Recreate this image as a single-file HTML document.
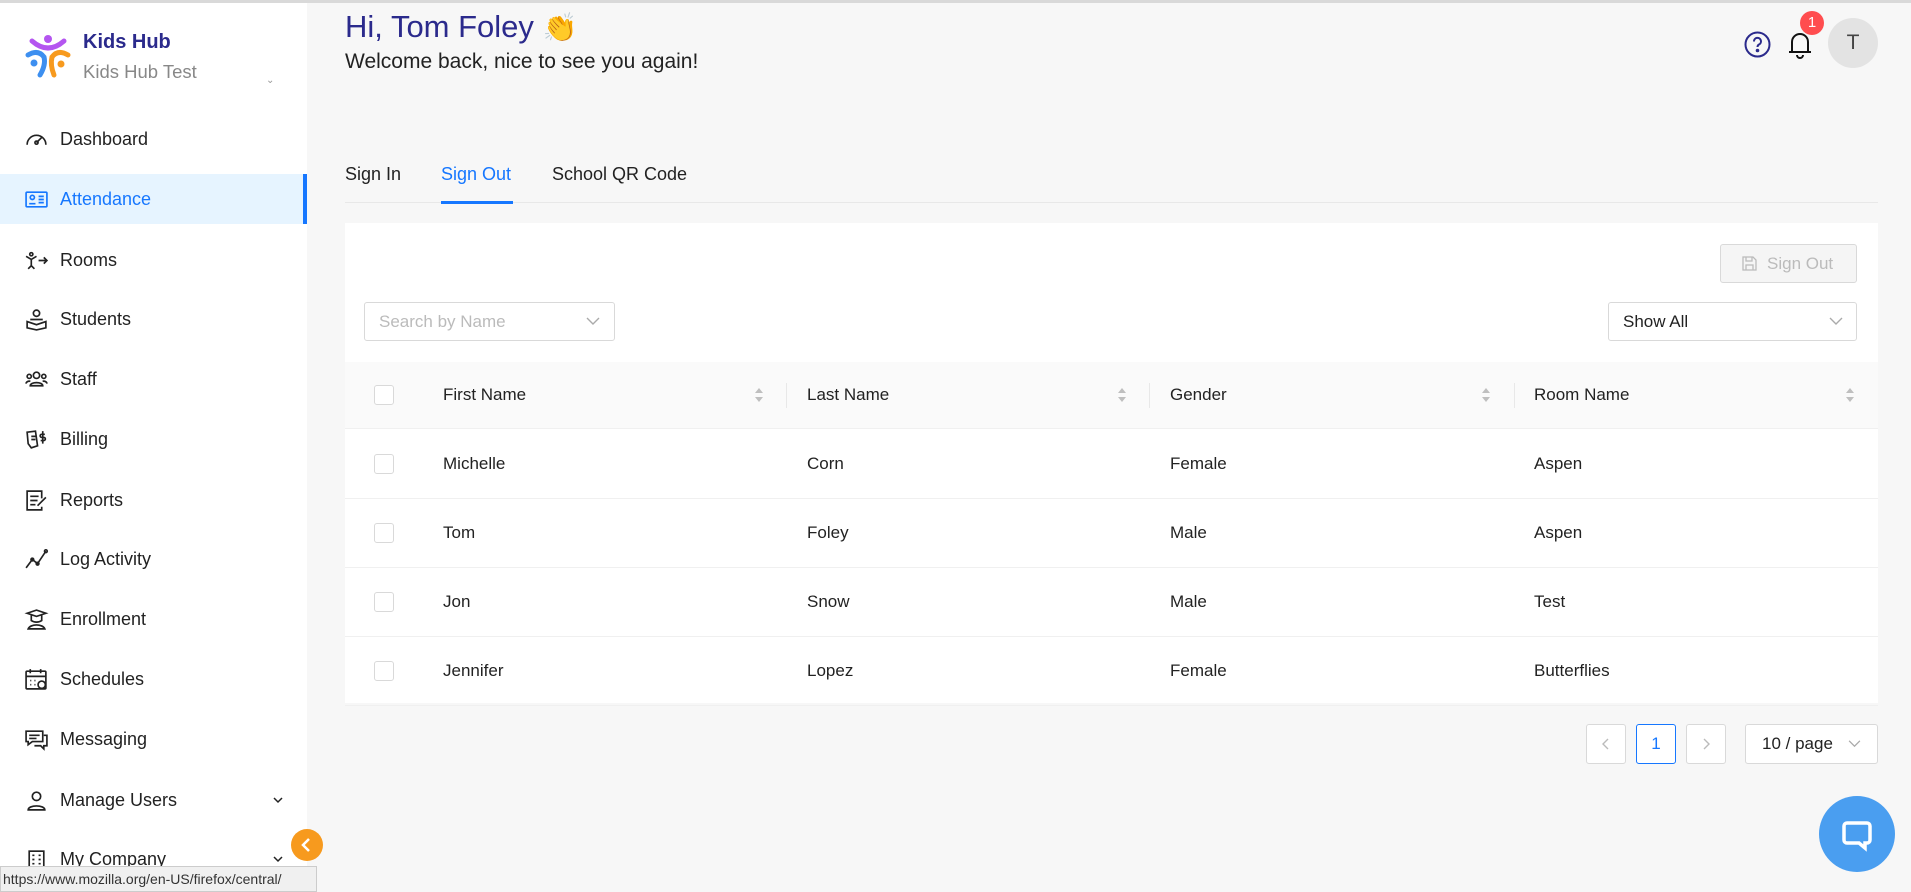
<!DOCTYPE html>
<html><head><meta charset="utf-8"><style>
*{box-sizing:border-box;margin:0;padding:0}
body{width:1911px;height:892px;overflow:hidden;background:#f7f7f7;font-family:"Liberation Sans",sans-serif;position:relative;color:#222}
.a{position:absolute}
.topline{left:0;top:0;width:1911px;height:3px;background:#d9d9d9}
.side{left:0;top:3px;width:307px;height:889px;background:#fff}
.mi{position:absolute;left:0;width:307px;height:50px;display:flex;align-items:center;font-size:18px;color:#222}
.mi svg{position:absolute;left:24px;width:25px;height:25px}
.mi span{position:absolute;left:60px}
.mi.act{background:#e6f4ff;color:#1677ff;border-right:4px solid #1677ff}
.chev{position:absolute;left:272px;width:12px;height:12px}
.card{left:345px;top:223px;width:1533px;height:480px;background:#fff}
.th{position:absolute;left:0;top:139px;width:1533px;height:67px;background:#fafafa;border-bottom:1px solid #f0f0f0}
.row{position:absolute;left:0;width:1533px;height:69px;border-bottom:1px solid #f0f0f0}
.cell{position:absolute;top:50%;transform:translateY(-50%);font-size:17px;color:#222}
.cb{position:absolute;left:29px;top:50%;margin-top:-10px;width:20px;height:20px;border:1px solid #d9d9d9;border-radius:3px;background:#fff}
.sort{position:absolute;top:50%;margin-top:-8px;width:10px;height:16px}
.div{position:absolute;top:21px;width:1px;height:25px;background:#e8e8e8}
.box{position:absolute;border:1px solid #d9d9d9;border-radius:3px;background:#fff}
</style></head><body>
<div class="a topline"></div>
<div class="a side">
 <svg class="a" style="left:24px;top:30px" width="48" height="48" viewBox="0 0 48 48">
  <path d="M8 8 Q24 22 40 8" stroke="#b455f0" stroke-width="5" fill="none" stroke-linecap="round"/>
  <circle cx="24" cy="6" r="4" fill="#b455f0"/>
  <path d="M4 22 Q14 16 20 24 Q22 32 16 42" stroke="#3d8ff0" stroke-width="5" fill="none" stroke-linecap="round"/>
  <circle cx="10" cy="30" r="3.5" fill="#3d8ff0"/>
  <path d="M44 22 Q34 16 28 24 Q26 32 30 42" stroke="#f79a1e" stroke-width="5" fill="none" stroke-linecap="round"/>
  <circle cx="37" cy="31" r="3.5" fill="#f79a1e"/>
 </svg>
 <div class="a" style="left:83px;top:28px;font-size:20px;font-weight:bold;color:#2B2A8C">Kids Hub</div>
 <div class="a" style="left:83px;top:58px;font-size:18.5px;color:#888">Kids Hub Test</div>
 <div class="a" style="left:266px;top:72px;font-size:10px;color:#999">⌄</div>
</div>
<div class="mi" style="top:114px"><svg viewBox="0 0 24 24" fill="none" stroke="#222" stroke-width="1.6"><path d="M3 17a9 9 0 1 1 18 0"/><path d="M12 15l5-5"/><circle cx="12" cy="15" r="1.5"/></svg><span>Dashboard</span></div>
<div class="mi act" style="top:174px"><svg viewBox="0 0 24 24" fill="none" stroke="#1677ff" stroke-width="1.6"><rect x="2" y="5" width="20" height="14" rx="1"/><circle cx="8" cy="10" r="2"/><path d="M5 16h6M14 9h5M14 12h5M14 15h5"/></svg><span>Attendance</span></div>
<div class="mi" style="top:235px"><svg viewBox="0 0 24 24" fill="none" stroke="#222" stroke-width="1.6"><circle cx="7" cy="6" r="1.5"/><path d="M2 8l5 3 5-3M7 11v6M4 20l3-3 3 3M14 12h8M19 9l3 3-3 3"/></svg><span>Rooms</span></div>
<div class="mi" style="top:294px"><svg viewBox="0 0 24 24" fill="none" stroke="#222" stroke-width="1.6"><circle cx="12" cy="6" r="3"/><path d="M6 12h12M3 14l9 3 9-3v6l-9 2-9-2z"/></svg><span>Students</span></div>
<div class="mi" style="top:354px"><svg viewBox="0 0 24 24" fill="none" stroke="#222" stroke-width="1.6"><circle cx="12" cy="8" r="3"/><circle cx="5" cy="9" r="2"/><circle cx="19" cy="9" r="2"/><path d="M6 18c0-4 12-4 12 0zM2 16c0-2 3-3 4-2M22 16c0-2-3-3-4-2"/></svg><span>Staff</span></div>
<div class="mi" style="top:414px"><svg viewBox="0 0 24 24" fill="none" stroke="#222" stroke-width="1.6"><path d="M3 5l8-1 2 14-6 2-3-4zM7 9h4M7 12h4M18 4v12M20 7h-3a1.5 1.5 0 0 0 0 3h2a1.5 1.5 0 0 1 0 3h-3"/></svg><span>Billing</span></div>
<div class="mi" style="top:475px"><svg viewBox="0 0 24 24" fill="none" stroke="#222" stroke-width="1.6"><path d="M17 10V3H3v18h14v-3M6 8h8M6 12h7M6 16h5M13 17l8-8"/></svg><span>Reports</span></div>
<div class="mi" style="top:534px"><svg viewBox="0 0 24 24" fill="none" stroke="#222" stroke-width="1.6"><path d="M2 20l6-8 5 4 8-12"/><circle cx="8" cy="12" r="1.3"/><circle cx="13" cy="16" r="1.3"/><circle cx="21" cy="4" r="1.3"/></svg><span>Log Activity</span></div>
<div class="mi" style="top:594px"><svg viewBox="0 0 24 24" fill="none" stroke="#222" stroke-width="1.6"><path d="M3 6l9-3 9 3-9 3zM7 8v5c3 2 7 2 10 0V8M4 21c2-5 14-5 16 0z"/></svg><span>Enrollment</span></div>
<div class="mi" style="top:654px"><svg viewBox="0 0 24 24" fill="none" stroke="#222" stroke-width="1.6"><rect x="2" y="4" width="19" height="17" rx="1"/><path d="M6 2v4M16 2v4M2 9h19"/><circle cx="17" cy="17" r="3.5" fill="#fff"/><path d="M6 13h1M10 13h1M6 17h1M10 17h1"/></svg><span>Schedules</span></div>
<div class="mi" style="top:714px"><svg viewBox="0 0 24 24" fill="none" stroke="#222" stroke-width="1.6"><path d="M2 4h16v10H8l-4 3v-3H2zM5 8h10M5 11h7M19 8h3v10h-3v3l-3-3h-6"/></svg><span>Messaging</span></div>
<div class="mi" style="top:775px"><svg viewBox="0 0 24 24" fill="none" stroke="#222" stroke-width="1.6"><circle cx="12" cy="8" r="4"/><path d="M4 21c0-5 16-5 16 0z"/></svg><span>Manage Users</span><svg class="chev" style="left:272px;width:12px;height:12px" viewBox="0 0 12 12" fill="none" stroke="#222" stroke-width="1.5"><path d="M2 4l4 4 4-4"/></svg></div>
<div class="mi" style="top:834px"><svg viewBox="0 0 24 24" fill="none" stroke="#222" stroke-width="1.6"><rect x="5" y="4" width="14" height="18"/><path d="M8 8h2M14 8h2M8 12h2M14 12h2M8 16h2M14 16h2"/></svg><span>My Company</span><svg class="chev" style="left:272px;width:12px;height:12px" viewBox="0 0 12 12" fill="none" stroke="#222" stroke-width="1.5"><path d="M2 4l4 4 4-4"/></svg></div>
<div class="a" style="left:0;top:866px;width:317px;height:26px;background:#f0f0f0;border:1px solid #ccc;font-size:14px;color:#333;padding:4px 2px;white-space:nowrap">https://www.mozilla.org/en-US/firefox/central/</div>
<div class="a" style="left:291px;top:829px;width:32px;height:32px;border-radius:50%;background:#f79a1e"><svg width="32" height="32" viewBox="0 0 32 32" fill="none" stroke="#fff" stroke-width="2.5"><path d="M18 10l-6 6 6 6"/></svg></div>
<div class="a" style="left:345px;top:9px;font-size:31px;color:#2B2A8C">Hi, Tom Foley <span style="font-size:28px">👏</span></div>
<div class="a" style="left:345px;top:50px;font-size:21px;color:#222">Welcome back, nice to see you again!</div>
<svg class="a" style="left:1744px;top:31px" width="27" height="27" viewBox="0 0 27 27" fill="none" stroke="#2B2A8C" stroke-width="2"><circle cx="13.5" cy="13.5" r="12"/><path d="M10 10.5a3.5 3.5 0 1 1 5 3c-1 .6-1.5 1.3-1.5 2.5"/><circle cx="13.5" cy="19.5" r=".8" fill="#2B2A8C"/></svg>
<svg class="a" style="left:1786px;top:28px" width="28" height="32" viewBox="0 0 28 32" fill="none" stroke="#111" stroke-width="2"><path d="M6 24V14a8 8 0 0 1 16 0v10zM3 24h22M11 27a3 3 0 0 0 6 0"/></svg>
<div class="a" style="left:1800px;top:11px;width:24px;height:24px;border-radius:50%;background:#ff4d4f;color:#fff;font-size:15px;text-align:center;line-height:24px">1</div>
<div class="a" style="left:1828px;top:18px;width:50px;height:50px;border-radius:50%;background:#e3e3e3;color:#444;font-size:21px;text-align:center;line-height:50px">T</div>
<div class="a" style="left:345px;top:202px;width:1533px;height:1px;background:#e8e8e8"></div>
<div class="a" style="left:345px;top:164px;font-size:18px;color:#222">Sign In</div>
<div class="a" style="left:441px;top:164px;font-size:18px;color:#1677ff">Sign Out</div>
<div class="a" style="left:441px;top:201px;width:72px;height:3px;background:#1677ff"></div>
<div class="a" style="left:552px;top:164px;font-size:18px;color:#222">School QR Code</div>
<div class="a card">
 <div class="box" style="left:1375px;top:21px;width:137px;height:39px;background:#f5f5f5;color:#bbb;font-size:17px;line-height:37px;padding-left:46px">Sign Out</div>
 <svg class="a" style="left:1397px;top:33px" width="15" height="15" viewBox="0 0 15 15" fill="none" stroke="#bbb" stroke-width="1.3"><path d="M1 1h10l3 3v10H1z M4 1v4h6V1 M4 14V9h7v5"/></svg>
 <div class="box" style="left:19px;top:79px;width:251px;height:39px;color:#bbb;font-size:17px;line-height:37px;padding-left:14px">Search by Name</div>
 <svg class="a" style="left:241px;top:93px" width="14" height="10" viewBox="0 0 14 10" fill="none" stroke="#aaa" stroke-width="1.4"><path d="M1 2l6 6 6-6"/></svg>
 <div class="box" style="left:1263px;top:79px;width:249px;height:39px;color:#222;font-size:17px;line-height:37px;padding-left:14px">Show All</div>
 <svg class="a" style="left:1484px;top:93px" width="14" height="10" viewBox="0 0 14 10" fill="none" stroke="#aaa" stroke-width="1.4"><path d="M1 2l6 6 6-6"/></svg>
 <div class="th">
  <div class="cb"></div>
  <div class="cell" style="left:98px">First Name</div>
  <div class="cell" style="left:462px">Last Name</div>
  <div class="cell" style="left:825px">Gender</div>
  <div class="cell" style="left:1189px">Room Name</div>
  <svg class="sort" style="left:409px" viewBox="0 0 10 16" fill="#bfbfbf"><path d="M5 1l4 5H1zM5 15l4-5H1z"/></svg>
  <svg class="sort" style="left:772px" viewBox="0 0 10 16" fill="#bfbfbf"><path d="M5 1l4 5H1zM5 15l4-5H1z"/></svg>
  <svg class="sort" style="left:1136px" viewBox="0 0 10 16" fill="#bfbfbf"><path d="M5 1l4 5H1zM5 15l4-5H1z"/></svg>
  <svg class="sort" style="left:1500px" viewBox="0 0 10 16" fill="#bfbfbf"><path d="M5 1l4 5H1zM5 15l4-5H1z"/></svg>
  <div class="div" style="left:441px"></div><div class="div" style="left:804px"></div><div class="div" style="left:1169px"></div>
 </div>
 <div class="row" style="top:207px"><div class="cb"></div><div class="cell" style="left:98px">Michelle</div><div class="cell" style="left:462px">Corn</div><div class="cell" style="left:825px">Female</div><div class="cell" style="left:1189px">Aspen</div></div>
 <div class="row" style="top:276px"><div class="cb"></div><div class="cell" style="left:98px">Tom</div><div class="cell" style="left:462px">Foley</div><div class="cell" style="left:825px">Male</div><div class="cell" style="left:1189px">Aspen</div></div>
 <div class="row" style="top:345px"><div class="cb"></div><div class="cell" style="left:98px">Jon</div><div class="cell" style="left:462px">Snow</div><div class="cell" style="left:825px">Male</div><div class="cell" style="left:1189px">Test</div></div>
 <div class="row" style="top:414px"><div class="cb"></div><div class="cell" style="left:98px">Jennifer</div><div class="cell" style="left:462px">Lopez</div><div class="cell" style="left:825px">Female</div><div class="cell" style="left:1189px">Butterflies</div></div>
</div>
<div class="a box" style="left:1586px;top:724px;width:40px;height:40px"><svg width="38" height="38" viewBox="0 0 38 38" fill="none" stroke="#bbb" stroke-width="1.4"><path d="M21 14l-5 5 5 5"/></svg></div>
<div class="a box" style="left:1636px;top:724px;width:40px;height:40px;border-color:#1677ff;color:#1677ff;font-size:17px;text-align:center;line-height:38px">1</div>
<div class="a box" style="left:1686px;top:724px;width:40px;height:40px"><svg width="38" height="38" viewBox="0 0 38 38" fill="none" stroke="#bbb" stroke-width="1.4"><path d="M17 14l5 5-5 5"/></svg></div>
<div class="a box" style="left:1745px;top:724px;width:133px;height:40px;font-size:17px;line-height:38px;padding-left:16px;color:#222">10 / page</div>
<svg class="a" style="left:1848px;top:739px" width="13" height="9" viewBox="0 0 14 10" fill="none" stroke="#aaa" stroke-width="1.4"><path d="M1 2l6 6 6-6"/></svg>
<div class="a" style="left:1819px;top:796px;width:76px;height:76px;border-radius:50%;background:#4a9ef0"></div>
<svg class="a" style="left:1838px;top:815px" width="38" height="38" viewBox="0 0 38 38" fill="none" stroke="#fff" stroke-width="3.5"><path d="M9 8h20a3 3 0 0 1 3 3v14a3 3 0 0 1-3 3h-2v5l-6-5H9a3 3 0 0 1-3-3V11a3 3 0 0 1 3-3z"/></svg>
</body></html>
